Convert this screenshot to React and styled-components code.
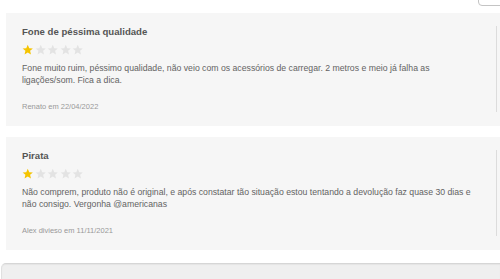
import styled, { createGlobalStyle } from "styled-components";

const GlobalStyle = createGlobalStyle`
  html, body {
    margin: 0;
    padding: 0;
    background: #fff;
    overflow: hidden;
    font-family: "Liberation Sans", Arial, sans-serif;
  }
`;

const Page = styled.div`
  width: 500px;
  height: 279px;
  overflow: hidden;
  display: flex;
  flex-direction: column;
`;

const TopBar = styled.div`
  height: 13px;
  display: flex;
  justify-content: flex-end;
`;

const TopButton = styled.div`
  width: 60px;
  height: 20px;
  margin-top: -16px;
  margin-right: -40px;
  border: 1px solid #c4c4c4;
  border-radius: 4px;
  background: #fff;
`;

const List = styled.div`
  display: flex;
  flex-direction: column;
  gap: 11px;
  padding-left: 6px;
`;

const Card = styled.div`
  background: #f6f6f6;
  margin-right: -20px;
  padding: 13px 23px 14px 16px;
`;

const Inner = styled.div`
  border-right: 1px solid #dcdcdc;
  padding-right: 14px;
`;

const Title = styled.h3`
  margin: 0;
  font-size: 9.6px;
  line-height: 12px;
  font-weight: bold;
  color: #555;
`;

const Stars = styled.div`
  display: flex;
  gap: 1px;
  margin-top: 6px;
  height: 12px;
  align-items: center;
`;

const Star = styled.svg`
  width: 11.5px;
  height: 11.5px;
  fill: ${({ $on }) => ($on ? "#f5c400" : "#e3e3e3")};
`;

const Body = styled.p`
  margin: 7px 0 0;
  font-size: 8.7px;
  line-height: 11.5px;
  color: #636363;
`;

const Meta = styled.div`
  margin-top: 16px;
  font-size: 7.5px;
  line-height: 10px;
  color: #999;
`;

const Footer = styled.div`
  margin-top: 13px;
  margin-left: 1px;
  flex: 1;
  background: #efefef;
  border-top: 1px solid #d6d6d6;
  border-left: 1px solid #e0e0e0;
  border-radius: 5px 0 0 0;
  box-shadow: inset 0 1px 1px #e4e4e4;
`;

const reviews = [
  {
    title: "Fone de péssima qualidade",
    rating: 1,
    text: "Fone muito ruim, péssimo qualidade, não veio com os acessórios de carregar. 2 metros e meio já falha as ligações/som. Fica a dica.",
    author: "Renato em 22/04/2022",
  },
  {
    title: "Pirata",
    rating: 1,
    text: "Não comprem, produto não é original, e após constatar tão situação estou tentando a devolução faz quase 30 dias e não consigo. Vergonha @americanas",
    author: "Alex divieso em 11/11/2021",
  },
];

const StarIcon = ({ on }) => (
  <Star $on={on} viewBox="0 0 24 24">
    <path d="M12 1.5l3.1 7.2 7.6.6-5.8 5 1.8 7.5L12 17.8l-6.7 4 1.8-7.5-5.8-5 7.6-.6z" />
  </Star>
);

export default function App() {
  return (
    <Page>
      <GlobalStyle />
      <TopBar>
        <TopButton />
      </TopBar>
      <List>
        {reviews.map((r) => (
          <Card key={r.title}>
            <Inner>
              <Title>{r.title}</Title>
              <Stars>
                {[1, 2, 3, 4, 5].map((n) => (
                  <StarIcon key={n} on={n <= r.rating} />
                ))}
              </Stars>
              <Body>{r.text}</Body>
              <Meta>{r.author}</Meta>
            </Inner>
          </Card>
        ))}
      </List>
      <Footer />
    </Page>
  );
}
